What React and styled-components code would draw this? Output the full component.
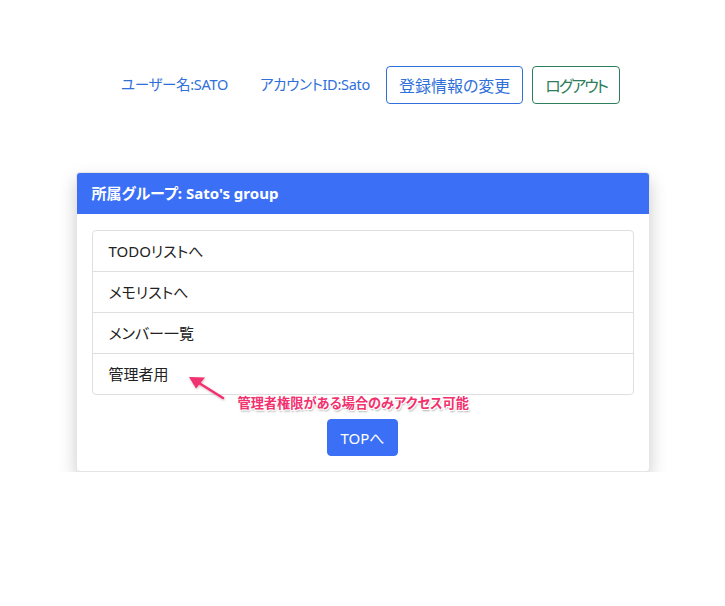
import React from "react";
import styled, { createGlobalStyle } from "styled-components";

const Global = createGlobalStyle`
  html, body { margin: 0; padding: 0; background: #fff; }
  body {
    font-family: "Noto Sans", "Noto Sans CJK JP", sans-serif;
    font-size: 16px;
    line-height: 1.5;
    color: #212529;
    font-feature-settings: "palt" 1;
  }
  * { box-sizing: border-box; }
  button { font-feature-settings: "palt" 1; }
`;

const Page = styled.div`
  display: flex;
  flex-direction: column;
  align-items: center;
  padding-top: 66px;
`;

const Nav = styled.nav`
  display: flex;
  align-items: center;
  justify-content: center;
  width: 100%;
`;

const NavLink = styled.a`
  display: block;
  padding: 7px 16px;
  color: #2f6fd9;
  font-size: 14.5px;
  letter-spacing: -0.3px;
  text-decoration: none;
  font-family: "Noto Sans", "Noto Sans CJK JP", sans-serif;
`;

const OutlineButton = styled.button`
  font-family: "Noto Sans CJK JP", sans-serif;
  font-size: 16px;
  line-height: 24px;
  padding: 6px 12px;
  height: 38px;
  background: #fff;
  border: 1px solid ${(p) => p.$color};
  color: ${(p) => p.$color};
  border-radius: 4px;
  margin-right: ${(p) => p.$mr || 0}px;
  letter-spacing: ${(p) => p.$ls || 0}px;
  white-space: nowrap;
  cursor: pointer;
`;

const Card = styled.div`
  width: 574px;
  margin-top: 68px;
  background: #fff;
  border: 1px solid rgba(0, 0, 0, 0.1);
  border-radius: 4px;
  box-shadow: 0 8px 18px rgba(0, 0, 0, 0.2);
`;

const CardHeader = styled.div`
  background: #3a6ff6;
  color: #fff;
  font-weight: 700;
  font-size: 15px;
  padding: 8px 15px;
  height: 41px;
  border-radius: 3px 3px 0 0;
  display: flex;
  align-items: center;
`;

const CardBody = styled.div`
  padding: 16px 15px 15px;
  display: flex;
  flex-direction: column;
  align-items: center;
`;

const ListGroup = styled.ul`
  position: relative;
  list-style: none;
  margin: 0;
  padding: 0;
  width: 100%;
  border: 1px solid #dfdfdf;
  border-radius: 4px;
`;

const ListItem = styled.li`
  padding: 0 16px;
  display: flex;
  align-items: center;
  font-size: 15px;
  color: #222;
  font-family: "Noto Sans", "Noto Sans CJK JP", sans-serif;
  border-top: ${(p) => (p.$first ? "none" : "1px solid #dfdfdf")};
  height: ${(p) => (p.$first ? 40 : 41)}px;
`;

const Note = styled.span`
  position: absolute;
  left: 145px;
  top: 162px;
  font-family: "Noto Sans CJK JP", sans-serif;
  font-size: 13.2px;
  font-weight: 700;
  color: #f2316f;
  white-space: nowrap;
  text-shadow: -1px -1px 0 #fff, 1px -1px 0 #fff, -1px 1px 0 #fff,
    1px 1px 0 #fff, 1px 2px 2px rgba(0, 0, 0, 0.35);
`;

const Arrow = styled.svg`
  position: absolute;
  left: 94px;
  top: 140px;
  overflow: visible;
`;

const PrimaryButton = styled.button`
  margin-top: 24px;
  font-family: "Noto Sans", "Noto Sans CJK JP", sans-serif;
  font-size: 15px;
  line-height: 24px;
  padding: 6px 12px;
  height: 37px;
  min-width: 69px;
  white-space: nowrap;
  background: #3a6ff6;
  color: #fff;
  border: 1px solid #3a6ff6;
  border-radius: 4px;
  cursor: pointer;
`;

export default function App() {
  return (
    <>
      <Global />
      <Page>
        <Nav>
          <NavLink>ユーザー名:SATO</NavLink>
          <NavLink>アカウントID:Sato</NavLink>
          <OutlineButton $color="#2f6fd9" $mr={9}>登録情報の変更</OutlineButton>
          <OutlineButton $color="#2e7d5b" $ls={-2}>ログアウト</OutlineButton>
        </Nav>
        <Card>
          <CardHeader>所属グループ: Sato's group</CardHeader>
          <CardBody>
            <ListGroup>
              <ListItem $first>TODOリストへ</ListItem>
              <ListItem>メモリストへ</ListItem>
              <ListItem>メンバー一覧</ListItem>
              <ListItem>管理者用</ListItem>
              <Arrow width="40" height="32" viewBox="0 0 40 32">
                <defs>
                  <filter id="sh" x="-20%" y="-20%" width="140%" height="140%">
                    <feDropShadow dx="0.5" dy="1" stdDeviation="0.8" floodColor="#000" floodOpacity="0.25" />
                  </filter>
                </defs>
                <g filter="url(#sh)">
                  <path d="M36 27 L12 12" stroke="#f2316f" strokeWidth="2.6" strokeLinecap="round" />
                  <path d="M2 6 L18 6.5 L9 17.5 Z" fill="#f2316f" />
                </g>
              </Arrow>
              <Note>管理者権限がある場合のみアクセス可能</Note>
            </ListGroup>
            <PrimaryButton>TOPへ</PrimaryButton>
          </CardBody>
        </Card>
      </Page>
    </>
  );
}
